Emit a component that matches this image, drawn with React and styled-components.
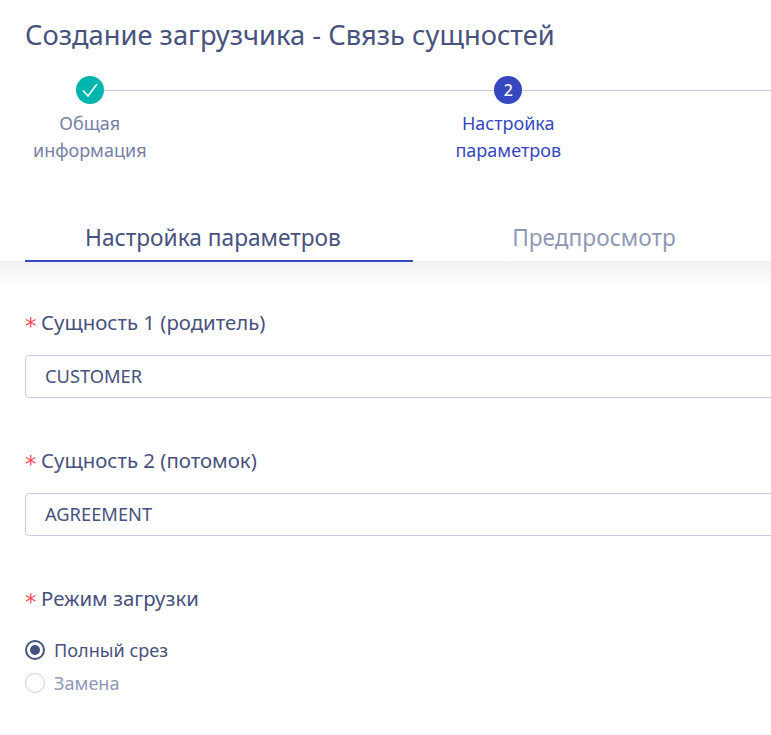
import React from "react";
import styled, { createGlobalStyle } from "styled-components";

const COLOR = {
  text: "#47527d",
  muted: "#7880a4",
  faint: "#8f98b5",
  blue: "#3647c0",
  teal: "#00b5ad",
  line: "#c8cce8",
  red: "#ff4d5e",
};

const GlobalStyle = createGlobalStyle`
  html, body {
    margin: 0;
    padding: 0;
    background: #fff;
    overflow: hidden;
  }
  body {
    font-family: "Noto Sans", "Open Sans", sans-serif;
    color: ${COLOR.text};
  }
`;

const Page = styled.div`
  width: 771px;
  height: 735px;
  overflow: hidden;
`;

const Header = styled.header`
  width: 1000px;
  height: 261px;
  padding: 15px 0 0 25px;
  box-sizing: border-box;
`;

const Title = styled.h1`
  margin: 0;
  font-size: 27.3px;
  line-height: 40px;
  font-weight: 400;
  color: ${COLOR.text};
  white-space: nowrap;
`;

const Steps = styled.ol`
  list-style: none;
  margin: 21px 0 0 -25px;
  padding: 0;
  display: flex;
  width: 1254px;
`;

const Step = styled.li`
  width: 418.5px;
  flex: none;
  margin-left: ${(p) => (p.$first ? "-119.5px" : "0")};
  display: flex;
  flex-direction: column;
  align-items: center;
  position: relative;
  &::after {
    content: "";
    position: absolute;
    top: 14px;
    left: 50%;
    width: 100%;
    height: 1px;
    background: ${COLOR.line};
  }
`;

const Dot = styled.span`
  width: 28px;
  height: 28px;
  border-radius: 50%;
  background: ${(p) => (p.$done ? COLOR.teal : COLOR.blue)};
  color: #fff;
  display: flex;
  align-items: center;
  justify-content: center;
  font-size: 16px;
  font-weight: 500;
  position: relative;
  z-index: 1;
`;

const StepLabel = styled.span`
  margin-top: 6px;
  width: 130px;
  text-align: center;
  font-size: 18px;
  line-height: 27px;
  color: ${(p) => (p.$active ? COLOR.blue : COLOR.muted)};
`;

const Tabs = styled.div`
  display: flex;
  margin-top: 56px;
  height: 42px;
`;

const Tab = styled.div`
  width: ${(p) => (p.$active ? "388px" : "362px")};
  flex: none;
  box-sizing: border-box;
  text-align: center;
  font-size: 22.7px;
  line-height: 30px;
  padding-top: 3px;
  padding-right: ${(p) => (p.$active ? "12px" : "0")};
  color: ${(p) => (p.$active ? COLOR.text : COLOR.faint)};
  border-bottom: ${(p) => (p.$active ? `2px solid ${COLOR.blue}` : "none")};
`;

const Body = styled.main`
  width: 771px;
  height: 474px;
  box-sizing: border-box;
  padding: 45px 0 0 25px;
  background: linear-gradient(#f0f1f4 0, #fafafb 16px, #fff 30px);
`;

const Field = styled.div`
  margin-bottom: 46px;
`;

const Label = styled.label`
  display: block;
  font-size: 20.4px;
  line-height: 32px;
  height: 32px;
  color: ${COLOR.text};
  white-space: nowrap;
`;

const Star = styled.span`
  color: ${COLOR.red};
  font-family: "DejaVu Sans", sans-serif;
  font-size: 23px;
  margin-right: 4.5px;
  line-height: 0;
  vertical-align: -4px;
`;

const Input = styled.div`
  margin-top: 17px;
  width: 900px;
  height: 43px;
  box-sizing: border-box;
  border: 1px solid ${COLOR.line};
  border-radius: 4px;
  padding-left: 19px;
  font-size: 18.3px;
  line-height: 40px;
  color: ${COLOR.text};
`;

const Radios = styled.div`
  margin-top: 26px;
  display: flex;
  flex-direction: column;
  gap: 13px;
`;

const RadioRow = styled.div`
  display: flex;
  align-items: center;
  gap: 9px;
  height: 20px;
  font-size: 18.1px;
  color: ${(p) => (p.$disabled ? COLOR.faint : COLOR.text)};
`;

const RadioMark = styled.span`
  width: 20px;
  height: 20px;
  box-sizing: border-box;
  border-radius: 50%;
  border: ${(p) =>
    p.$checked ? `2px solid ${COLOR.text}` : `1px solid ${COLOR.line}`};
  display: flex;
  align-items: center;
  justify-content: center;
  &::after {
    content: "";
    display: ${(p) => (p.$checked ? "block" : "none")};
    width: 10px;
    height: 10px;
    border-radius: 50%;
    background: ${COLOR.text};
  }
`;

const Check = () => (
  <svg width="18" height="16" viewBox="0 0 18 16" fill="none">
    <path d="M2 8.5l5 5.5L16 2" stroke="#fff" strokeWidth="1.5" />
  </svg>
);

const App = () => {
  return (
    <Page>
      <GlobalStyle />
      <Header>
        <Title>Создание загрузчика - Связь сущностей</Title>
        <Steps>
          <Step $first>
            <Dot $done>
              <Check />
            </Dot>
            <StepLabel>Общая информация</StepLabel>
          </Step>
          <Step>
            <Dot>2</Dot>
            <StepLabel $active>Настройка параметров</StepLabel>
          </Step>
        </Steps>
        <Tabs>
          <Tab $active>Настройка параметров</Tab>
          <Tab>Предпросмотр</Tab>
        </Tabs>
      </Header>
      <Body>
        <Field>
          <Label>
            <Star>*</Star>Сущность 1 (родитель)
          </Label>
          <Input>CUSTOMER</Input>
        </Field>
        <Field>
          <Label>
            <Star>*</Star>Сущность 2 (потомок)
          </Label>
          <Input>AGREEMENT</Input>
        </Field>
        <Field>
          <Label>
            <Star>*</Star>Режим загрузки
          </Label>
          <Radios>
            <RadioRow>
              <RadioMark $checked />
              Полный срез
            </RadioRow>
            <RadioRow $disabled>
              <RadioMark />
              Замена
            </RadioRow>
          </Radios>
        </Field>
      </Body>
    </Page>
  );
};

export default App;
